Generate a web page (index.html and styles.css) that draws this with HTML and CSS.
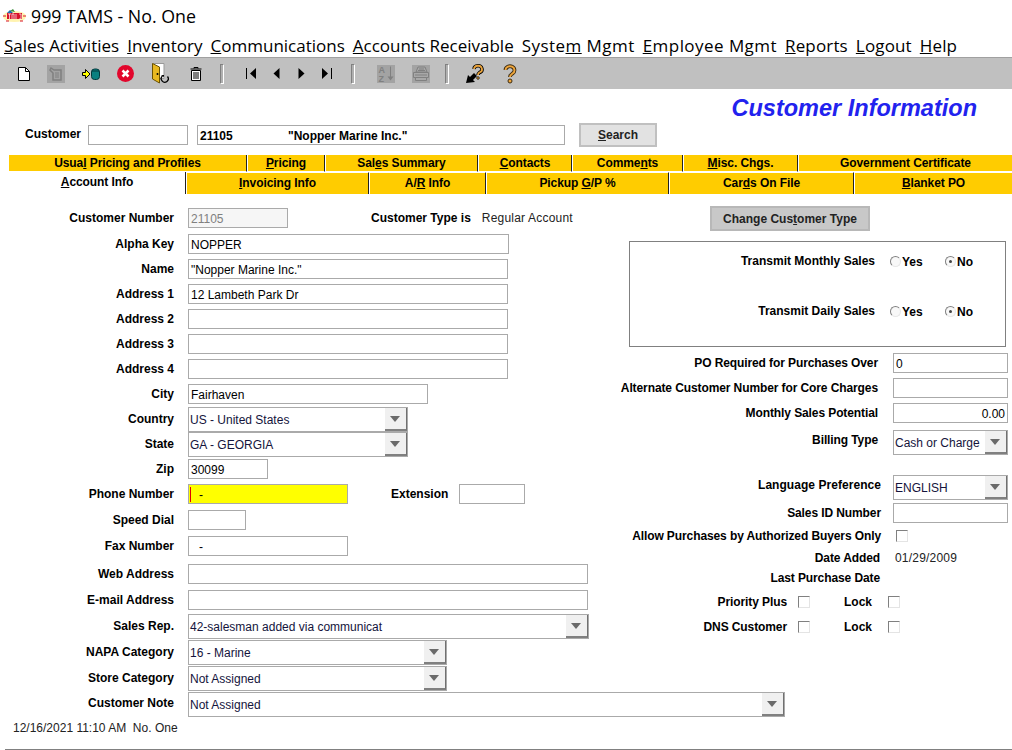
FILE: index.html
```html
<!DOCTYPE html>
<html lang="en">
<head>
    <meta charset="UTF-8">
    <title>999 TAMS - No. One</title>
    <link rel="stylesheet" href="styles.css">
</head>
<body>
    <div class="titlebar">
        <svg class="logo" width="23" height="13" viewBox="0 0 23 13">
            <ellipse cx="11.500" cy="7.500" rx="11.500" ry="5.500" fill="#fff3b0"/>
            <path d="M4 4l3-3 3 3z" fill="#1d6fb0"/>
            <path d="M7 2l3-2 2 3z" fill="#3b8f3b"/>
            <rect x="4" y="4" width="15" height="6" fill="#d8122a"/>
            <path d="M5 5h3M6.500 5v5M9 10V5h2v5M13 5v5M16 5h2v5h-2" stroke="#fff" stroke-width=".7" fill="none"/>
            <path d="M0 7h3M20 7h3M3 12h3M17 12h3" stroke="#d8122a" stroke-width="1"/>
        </svg>
        <span class="title-text">999 TAMS - No. One</span>
    </div>
    <nav class="menubar">
        <span><u>S</u>ales Activities</span>
        <span><u>I</u>nventory</span>
        <span><u>C</u>ommunications</span>
        <span><u>A</u>ccounts Receivable</span>
        <span class="menu-wide">Syste<u>m</u> Mgmt</span>
        <span class="menu-wide"><u>E</u>mployee Mgmt</span>
        <span class="menu-mid"><u>R</u>eports</span>
        <span class="menu-mid"><u>L</u>ogout</span>
        <span class="menu-mid"><u>H</u>elp</span>
    </nav>
    <div class="toolbar">
        <div class="tool tool-first">
            <svg width="12" height="14" viewBox="0 0 12 14"><path d="M.5.500h7l4 4v9H.5z" fill="#fff" stroke="#000"/><path d="M7.500.500v4h4" fill="none" stroke="#000"/></svg>
        </div>
        <div class="tool">
            <svg width="18" height="18" viewBox="0 0 18 18"><rect width="18" height="18" fill="#a3a3a3"/><path d="M4 3l3 2 7 0v10H6V8L3 5z" fill="none" stroke="#808080" stroke-width="1.500"/><path d="M8 8h4M8 10h4M8 12h4" stroke="#808080"/></svg>
        </div>
        <div class="tool">
            <svg width="18" height="12" viewBox="0 0 18 12"><path d="M.5 4.500h3v-3l4.500 4.500-4.500 4.500v-3h-3z" fill="#ffff00" stroke="#000"/><rect x="9.500" y="1" width="8" height="10.500" rx="3" fill="#0a8080" stroke="#04393c"/><path d="M10 3h7" stroke="#04393c"/></svg>
        </div>
        <div class="tool">
            <svg width="17" height="17" viewBox="0 0 17 17"><circle cx="8.500" cy="8.500" r="8.500" fill="#e2062c"/><path d="M5.500 5.500l6 6M11.500 5.500l-6 6" stroke="#fff" stroke-width="2.500"/></svg>
        </div>
        <div class="tool">
            <svg width="17" height="21" viewBox="0 0 17 21"><path d="M1 .500h11v15H1z" fill="#fff" stroke="#999"/><path d="M.5.500l7 3.500v16l-7-4z" fill="#e8b820" stroke="#6b5200"/><circle cx="5.500" cy="11" r="1" fill="#000"/><path d="M15.500 13.500a3.500 3.500 0 1 1-5-.5" fill="none" stroke="#000" stroke-width="1.300"/><path d="M9 12h3v2z" fill="#000"/></svg>
        </div>
        <div class="tool">
            <svg width="12" height="14" viewBox="0 0 12 14"><path d="M4 1.500V.500h4v1M.5 2h11" stroke="#000" fill="none"/><path d="M1.500 3.500h9v10h-9z" fill="#fff" stroke="#000"/><path d="M4 5v7M6 5v7M8 5v7" stroke="#000"/></svg>
        </div>
        <div class="sep sep-first"></div>
        <div class="tool tool-nav">
            <svg width="11" height="11" viewBox="0 0 11 11"><path d="M.5 0v11" stroke="#000"/><path d="M10 0v11L4 5.500z" fill="#000"/></svg>
        </div>
        <div class="tool tool-nav">
            <svg width="7" height="11" viewBox="0 0 7 11"><path d="M6.500 0v11L.5 5.500z" fill="#000"/></svg>
        </div>
        <div class="tool tool-nav">
            <svg width="7" height="11" viewBox="0 0 7 11"><path d="M.5 0v11l6-5.500z" fill="#000"/></svg>
        </div>
        <div class="tool tool-nav">
            <svg width="11" height="11" viewBox="0 0 11 11"><path d="M1 0v11l6-5.500z" fill="#000"/><path d="M10.500 0v11" stroke="#000"/></svg>
        </div>
        <div class="sep sep-mid"></div>
        <div class="tool">
            <svg width="18" height="18" viewBox="0 0 18 18"><rect width="18" height="18" fill="#a3a3a3"/><text x="1.500" y="8" class="sort-letter">A</text><text x="1.500" y="16.500" class="sort-letter">Z</text><path d="M13.500 1.500v12" stroke="#808080"/><path d="M10.500 11.500h6l-3 4z" fill="#808080"/></svg>
        </div>
        <div class="tool">
            <svg width="18" height="18" viewBox="0 0 18 18"><rect width="18" height="18" fill="#a3a3a3"/><path d="M6 2h7l2 5H4z" fill="#a8a8a8" stroke="#808080"/><path d="M7 4h5M6 5.500h7" stroke="#808080"/><path d="M1.500 7.500h15v5h-15z" fill="#a8a8a8" stroke="#808080"/><path d="M3.500 12.500h11v3h-11z" fill="#a8a8a8" stroke="#808080"/><path d="M3 10h12" stroke="#808080"/></svg>
        </div>
        <div class="sep sep-last"></div>
        <div class="tool">
            <svg width="18" height="19" viewBox="0 0 18 19"><path d="M0 19l2-8 2 2 4-4 3 3-4 4 2 2z" fill="#000"/><path d="M8 5a4 3.500 0 1 1 5.500 3.500c-1 .7-1.500 1-1.500 2.500" fill="none" stroke="#000" stroke-width="3.500"/><path d="M8 5a4 3.500 0 1 1 5.500 3.500c-1 .7-1.500 1-1.500 2.500" fill="none" stroke="#e8a23c" stroke-width="1.800"/><circle cx="12" cy="14" r="1.300" fill="#e8a23c" stroke="#000" stroke-width=".7"/></svg>
        </div>
        <div class="tool">
            <svg width="14" height="20" viewBox="0 0 14 20"><path d="M2.500 6a4.500 4 0 1 1 7 3.500C8 10.500 7 11 7 13" fill="none" stroke="#3a2a10" stroke-width="3.800"/><path d="M2.500 6a4.500 4 0 1 1 7 3.500C8 10.500 7 11 7 13" fill="none" stroke="#eea53c" stroke-width="2"/><circle cx="7" cy="17" r="2" fill="#eea53c" stroke="#3a2a10"/></svg>
        </div>
    </div>

    <div class="page-title">Customer Information</div>

    <div class="customer-bar">
        <label class="customer-label">Customer</label>
        <div class="field customer-code"></div>
        <div class="field customer-name"><span class="cust-num">21105</span>"Nopper Marine Inc."</div>
        <div class="btn search-btn"><u>S</u>earch</div>
    </div>

    <div class="tabs tabs-top">
        <div class="tab">Usua<u>l</u> Pricing and Profiles</div>
        <div class="tab"><u>P</u>ricing</div>
        <div class="tab">Sal<u>e</u>s Summary</div>
        <div class="tab"><u>C</u>ontacts</div>
        <div class="tab">Comme<u>n</u>ts</div>
        <div class="tab"><u>M</u>isc. Chgs.</div>
        <div class="tab">Government Certificate</div>
    </div>
    <div class="tabs tabs-bottom">
        <div class="tab tab-active"><u>A</u>ccount Info</div>
        <div class="tab"><u>I</u>nvoicing Info</div>
        <div class="tab">A/<u>R</u> Info</div>
        <div class="tab">Pickup <u>G</u>/P %</div>
        <div class="tab">Car<u>d</u>s On File</div>
        <div class="tab"><u>B</u>lanket PO</div>
    </div>

    <div class="form-body">
        <div class="col-left">
            <div class="row">
                <label>Customer Number</label>
                <div class="field w-100 field-readonly">21105</div>
                <label class="inline-label type-label">Customer Type is</label>
                <span class="plain-value type-value">Regular Account</span>
            </div>
            <div class="row mt-6"><label>Alpha Key</label><div class="field w-321">NOPPER</div></div>
            <div class="row"><label>Name</label><div class="field w-320">"Nopper Marine Inc."</div></div>
            <div class="row"><label>Address 1</label><div class="field w-320">12 Lambeth Park Dr</div></div>
            <div class="row"><label>Address 2</label><div class="field w-320"></div></div>
            <div class="row"><label>Address 3</label><div class="field w-320"></div></div>
            <div class="row"><label>Address 4</label><div class="field w-320"></div></div>
            <div class="row"><label>City</label><div class="field w-240">Fairhaven</div></div>
            <div class="row row-combo mt-3"><label>Country</label><div class="combo w-220"><span class="combo-text">US - United States</span><span class="combo-arrow"></span></div></div>
            <div class="row row-combo mt-0"><label>State</label><div class="combo w-220"><span class="combo-text">GA - GEORGIA</span><span class="combo-arrow"></span></div></div>
            <div class="row mt-2"><label>Zip</label><div class="field w-80">30099</div></div>
            <div class="row">
                <label>Phone Number</label>
                <div class="field w-160 field-phone"><span class="caret"></span>-</div>
                <label class="inline-label ext-label">Extension</label>
                <div class="field w-66 ext-field"></div>
            </div>
            <div class="row mt-6"><label>Speed Dial</label><div class="field w-58"></div></div>
            <div class="row mt-6"><label>Fax Number</label><div class="field w-160 field-fax">-</div></div>
            <div class="row mt-8"><label>Web Address</label><div class="field w-400"></div></div>
            <div class="row mt-6"><label>E-mail Address</label><div class="field w-400"></div></div>
            <div class="row row-combo mt-4"><label>Sales Rep.</label><div class="combo w-401"><span class="combo-text">42-salesman added via communicat</span><span class="combo-arrow"></span></div></div>
            <div class="row row-combo mt-1"><label>NAPA Category</label><div class="combo w-259"><span class="combo-text">16 - Marine</span><span class="combo-arrow"></span></div></div>
            <div class="row row-combo mt-1"><label>Store Category</label><div class="combo w-259"><span class="combo-text">Not Assigned</span><span class="combo-arrow"></span></div></div>
        </div>

        <div class="col-right">
            <div class="btn type-btn">Change Cus<u>t</u>omer Type</div>
            <div class="transmit-box">
                <div class="transmit-row">
                    <label>Transmit Monthly Sales</label>
                    <span class="option"><span class="radio"></span>Yes</span>
                    <span class="option"><span class="radio radio-on"></span>No</span>
                </div>
                <div class="transmit-row">
                    <label>Transmit Daily Sales</label>
                    <span class="option"><span class="radio"></span>Yes</span>
                    <span class="option"><span class="radio radio-on"></span>No</span>
                </div>
            </div>
            <div class="rrow mt-6"><label>PO Required for Purchases Over</label><div class="field w-115">0</div></div>
            <div class="rrow"><label>Alternate Customer Number for Core Charges</label><div class="field w-115"></div></div>
            <div class="rrow"><label>Monthly Sales Potential</label><div class="field w-115 field-number">0.00</div></div>
            <div class="rrow rrow-combo mt-7"><label>Billing Type</label><div class="combo w-115"><span class="combo-text">Cash or Charge</span><span class="combo-arrow"></span></div></div>
            <div class="rrow rrow-combo mt-20"><label class="label-wide label-lang">Language Preference</label><div class="combo w-115"><span class="combo-text">ENGLISH</span><span class="combo-arrow"></span></div></div>
            <div class="rrow mt-3"><label class="label-wide">Sales ID Number</label><div class="field w-115"></div></div>
            <div class="rrow mt-3"><label class="label-wide">Allow Purchases by Authorized Buyers Only</label><span class="check check-allow"></span></div>
            <div class="rrow mt-2"><label class="label-date">Date Added</label><span class="plain-value date-value">01/29/2009</span></div>
            <div class="rrow mt-0"><label class="label-date">Last Purchase Date</label></div>
            <div class="rrow mt-4">
                <label class="label-flag">Priority Plus</label><span class="check"></span>
                <label class="inline-label lock-label">Lock</label><span class="check"></span>
            </div>
            <div class="rrow">
                <label class="label-flag">DNS Customer</label><span class="check"></span>
                <label class="inline-label lock-label">Lock</label><span class="check"></span>
            </div>
        </div>
    </div>

    <div class="row row-note mt-1"><label>Customer Note</label><div class="combo w-597"><span class="combo-text">Not Assigned</span><span class="combo-arrow"></span></div></div>

    <div class="status">12/16/2021 11:10 AM&nbsp; No. One</div>
    <div class="bottom-line"></div>
</body>
</html>
```

FILE: styles.css
```css
body {
    margin: 0;
    height: 750px;
    overflow: hidden;
    background-color: white;
    font-family: "Liberation Sans", Arial, sans-serif;
    font-size: 12px;
    color: #000;
}
label {
    font-weight: bold;
}

/* title and menu */
.titlebar {
    display: flex;
    align-items: center;
    height: 31px;
    padding: 0 0 1px 3px;
}
.logo {
    margin-right: 5px;
}
.title-text {
    font-family: "Open Sans", sans-serif;
    font-size: 17.800px;
}
.menubar {
    display: flex;
    gap: 8px;
    height: 26px;
    padding-left: 4px;
    font-family: "Open Sans", sans-serif;
    font-size: 17px;
    line-height: 27px;
    box-sizing: border-box;
    border-bottom: 1px solid #a0a0a0;
}
.menu-wide {
    letter-spacing: .45px;
}
.menu-mid {
    letter-spacing: .15px;
}

/* toolbar */
.toolbar {
    display: flex;
    align-items: center;
    height: 31px;
    background-color: #c0c0c0;
}
.tool {
    display: flex;
    align-items: center;
    justify-content: center;
    width: 35px;
    flex: none;
}
.tool-first {
    width: 28px;
    margin-left: 10px;
}
.tool-nav {
    width: 25px;
}
.sep {
    width: 2px;
    height: 18px;
    flex: none;
    background-color: #b0b0b0;
    border: 1px solid #fff;
    border-left-color: #808080;
    border-top-color: #808080;
}
.sep-first {
    margin: 0 15px 0 7px;
}
.sep-mid {
    margin: 0 13px 0 12px;
}
.sep-last {
    margin: 0 8px 0 7px;
}
.sort-letter {
    font-size: 9px;
    font-weight: bold;
    fill: #808080;
}

/* heading and customer search */
.page-title {
    height: 33px;
    padding-right: 35px;
    text-align: right;
    color: #2222ee;
    font-size: 23.500px;
    font-weight: bold;
    font-style: italic;
    line-height: 39px;
}
.customer-bar {
    display: flex;
    align-items: center;
    height: 25px;
    margin-bottom: 8px;
}
.customer-label {
    width: 81px;
    margin-right: 7px;
    padding-bottom: 1px;
    text-align: right;
}
.customer-code {
    width: 100px;
}
.customer-name {
    width: 368px;
    margin-left: 9px;
    border-color: #888;
    font-weight: bold;
    line-height: 17px;
}
.cust-num {
    display: inline-block;
    width: 88px;
}
.search-btn {
    width: 78px;
    height: 24px;
    margin-left: 14px;
    background-color: #e2e2e2;
    border-color: #cfcfcf;
}

/* tabs */
.tabs {
    display: grid;
    margin-left: 9px;
    font-weight: bold;
    letter-spacing: -.08px;
}
.tabs-top {
    grid-template-columns: 238px 78px 153px 94px 111px 115px 1fr;
    height: 17px;
}
.tabs-bottom {
    grid-template-columns: 177px 183px 117px 183px 185px 1fr;
    height: 20px;
}
.tab {
    background-color: #ffcc00;
    border-right: 1px solid #222;
    border-left: 1px solid #fff;
    border-top: 1px solid #fff;
    box-sizing: border-box;
    text-align: center;
    line-height: 21px;
}
.tabs-top .tab {
    border-top: none;
    border-bottom: 1px solid #fff;
    line-height: 16px;
}
.tabs-top .tab:first-child,
.tabs-bottom .tab:first-child {
    border-left: none;
}
.tab:last-child {
    border-right: none;
}
.tab-active {
    background-color: white;
    border-top: none;
    height: 22px;
    line-height: 21px;
}

/* form */
.form-body {
    display: flex;
}
.col-left {
    width: 620px;
    flex: none;
    padding-top: 16px;
}
.col-right {
    width: 392px;
    padding-top: 14px;
}
.row {
    display: flex;
    align-items: center;
    margin-top: 5px;
}
.col-left .row:first-child {
    margin-top: 0;
}
.row > label:first-child {
    width: 174px;
    margin-right: 14px;
    text-align: right;
    flex: none;
}
.row-combo > label:first-child {
    padding-bottom: 2px;
}
.row-note > label:first-child {
    padding-bottom: 4px;
}
.field {
    height: 20px;
    box-sizing: border-box;
    border: 1px solid #aaa;
    padding-left: 2px;
    line-height: 20px;
    background-color: white;
    white-space: nowrap;
    flex: none;
}
.field-readonly {
    background-color: #f6f6f6;
    color: #808080;
}
.field-phone {
    position: relative;
    padding-left: 10px;
    background-color: #ffff00;
}
.caret {
    position: absolute;
    left: 1px;
    top: 2px;
    width: 1px;
    height: 15px;
    background-color: #e00000;
}
.field-fax {
    padding-left: 10px;
}
.field-number {
    padding-right: 2px;
    text-align: right;
}
.combo {
    display: flex;
    height: 25px;
    box-sizing: border-box;
    border: 1px solid #aaa;
    background-color: white;
    flex: none;
}
.combo-text {
    flex: 1;
    padding-left: 1px;
    line-height: 24px;
    color: #14143c;
    white-space: nowrap;
    overflow: hidden;
}
.combo-arrow {
    position: relative;
    width: 22px;
    flex: none;
    box-sizing: border-box;
    background-color: #f0f0f0;
    border-right: 1px solid #707070;
    border-bottom: 2px solid #808080;
}
.combo-arrow::after {
    content: "";
    position: absolute;
    left: 5px;
    top: 8px;
    border-left: 5px solid transparent;
    border-right: 5px solid transparent;
    border-top: 6px solid #6a6a6a;
}
.w-58 { width: 58px; }
.w-66 { width: 66px; }
.w-80 { width: 80px; }
.w-100 { width: 100px; }
.w-115 { width: 115px; }
.w-160 { width: 160px; }
.w-220 { width: 220px; }
.w-240 { width: 240px; }
.w-259 { width: 259px; }
.w-320 { width: 320px; }
.w-321 { width: 321px; }
.w-400 { width: 400px; }
.w-401 { width: 401px; }
.w-597 { width: 597px; }
.mt-0 { margin-top: 0; }
.mt-1 { margin-top: 1px; }
.mt-2 { margin-top: 2px; }
.mt-3 { margin-top: 3px; }
.mt-4 { margin-top: 4px; }
.mt-6 { margin-top: 6px; }
.mt-7 { margin-top: 7px; }
.mt-8 { margin-top: 8px; }
.mt-20 { margin-top: 20px; }
.inline-label {
    white-space: nowrap;
}
.type-label {
    margin-left: 83px;
}
.plain-value {
    color: #222;
    letter-spacing: .2px;
}
.type-value {
    margin-left: 11px;
}
.ext-label {
    margin-left: 43px;
    margin-right: 11px;
}

/* right column */
.btn {
    display: flex;
    align-items: center;
    justify-content: center;
    box-sizing: border-box;
    border: 2px solid #c0c0c0;
    font-weight: bold;
    color: #222;
}
.type-btn {
    width: 160px;
    height: 25px;
    margin-left: 90px;
    background-color: #c8c8c8;
    border-color: #b8b8b8;
}
.transmit-box {
    width: 377px;
    height: 106px;
    box-sizing: border-box;
    margin: 10px 0 0 9px;
    padding-top: 9px;
    border: 1px solid #808080;
}
.transmit-row {
    display: flex;
    align-items: center;
    height: 20px;
    margin-bottom: 30px;
}
.transmit-row label {
    width: 245px;
    margin-right: 15px;
    text-align: right;
}
.option {
    display: flex;
    align-items: center;
    width: 55px;
    font-weight: bold;
    padding-top: 1px;
}
.radio {
    position: relative;
    width: 11px;
    height: 11px;
    margin-right: 1px;
    box-sizing: border-box;
    border-radius: 50%;
    border: 1px solid;
    border-color: #808080 #e8e8e8 #e8e8e8 #808080;
    background-color: #f8f8f8;
}
.radio-on::after {
    content: "";
    position: absolute;
    left: 3px;
    top: 3px;
    width: 3px;
    height: 3px;
    border-radius: 50%;
    background-color: #444;
}
.rrow {
    display: flex;
    align-items: center;
    height: 20px;
    margin-top: 5px;
}
.rrow-combo {
    height: 25px;
}
.rrow.mt-0 { margin-top: 0; }
.rrow.mt-1 { margin-top: 1px; }
.rrow.mt-2 { margin-top: 2px; }
.rrow.mt-3 { margin-top: 3px; }
.rrow.mt-4 { margin-top: 4px; }
.rrow.mt-6 { margin-top: 6px; }
.rrow.mt-7 { margin-top: 7px; }
.rrow.mt-20 { margin-top: 20px; }
.rrow > label:first-child {
    width: 258px;
    margin-right: 15px;
    text-align: right;
    white-space: nowrap;
    letter-spacing: -.1px;
    flex: none;
}
.rrow-combo > label:first-child {
    padding-bottom: 5px;
}
.rrow > label.label-wide {
    width: 261px;
    margin-right: 12px;
}
.rrow > label.label-lang {
    letter-spacing: .05px;
}
.rrow > label.label-date {
    width: 260px;
    margin-right: 15px;
}
.rrow > label.label-flag {
    width: 167px;
    margin-right: 11px;
}
.check {
    width: 12px;
    height: 12px;
    box-sizing: border-box;
    border: 1px solid;
    border-color: #808080 #e4e4e4 #e4e4e4 #808080;
    flex: none;
}
.check-allow {
    margin-left: 3px;
}
.lock-label {
    margin: 0 16px 0 34px;
}

/* footer */
.status {
    height: 20px;
    margin: 1px 0 11px 13px;
    line-height: 20px;
    color: #222;
}
.bottom-line {
    height: 1px;
    margin-left: 5px;
    background-color: #808080;
}
```
